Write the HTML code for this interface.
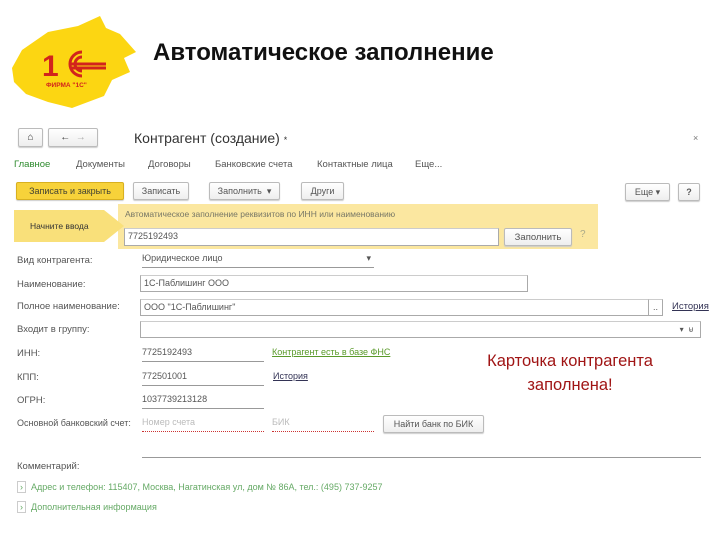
<!DOCTYPE html>
<html><head><meta charset="utf-8"><style>
*{margin:0;padding:0;box-sizing:border-box}
body{width:720px;height:540px;background:#fff;position:relative;overflow:hidden;font-family:"Liberation Sans",sans-serif;color:#444}
.a{position:absolute;white-space:nowrap}
.s{font-size:9.5px;color:#555}
.btn{position:absolute;border:1px solid #bbb;border-radius:2px;background:linear-gradient(#fff,#eee);font-size:9px;color:#555;text-align:center;line-height:17px;box-shadow:0 1px 1px #ccc}
.fld{position:absolute;border:1px solid #aaa;border-top-color:#ccc;background:#fff;height:17px;font-size:9px;line-height:15px;padding-left:3px;color:#555}
.ul{position:absolute;border-bottom:1px solid #999;height:17px;font-size:9px;line-height:15px;color:#555}
</style></head><body>
<svg class="a" style="left:8px;top:10px" width="130" height="100" viewBox="0 0 130 100">
<path d="M14 40 L40 22 L70 16 L92 6 L98 18 L112 24 L128 42 L116 48 L122 62 L104 70 L96 86 L64 98 L40 92 L18 84 L6 72 L4 58 Z" fill="#fcd612"/>
<text x="34" y="66" font-family="Liberation Sans" font-weight="bold" font-size="30" fill="#d2241c">1</text>
<path d="M74 42 a12 12 0 1 0 0 24 M74 47 a7 7 0 1 0 0 14 M62 54 h36 M62 58 h36" fill="none" stroke="#d2241c" stroke-width="3"/>
<text x="38" y="77" font-family="Liberation Sans" font-weight="bold" font-size="6.5" fill="#d2241c">ФИРМА "1С"</text>
</svg>
<div class="a" style="left:153px;top:39px;font-size:24px;color:#111;font-weight:bold">Автоматическое заполнение</div>

<div class="btn" style="left:18px;top:128px;width:25px;height:19px;font-size:10px;color:#333">⌂</div>
<div class="btn" style="left:48px;top:128px;width:50px;height:19px;font-size:10px;color:#333">←&nbsp;&nbsp;<span style="color:#aaa">→</span></div>
<div class="a" style="left:134px;top:130px;font-size:14px;color:#333">Контрагент (создание) <span style="font-size:9px">*</span></div>
<div class="a" style="left:693px;top:133px;font-size:9px;color:#777">×</div>

<div class="a s" style="left:14px;top:159px;color:#2e8b2e">Главное</div>
<div class="a s" style="left:76px;top:159px">Документы</div>
<div class="a s" style="left:148px;top:159px">Договоры</div>
<div class="a s" style="left:215px;top:159px">Банковские счета</div>
<div class="a s" style="left:317px;top:159px">Контактные лица</div>
<div class="a s" style="left:415px;top:159px">Еще...</div>

<div class="btn" style="left:16px;top:182px;width:108px;height:18px;background:#f7d23a;border-color:#d8b020;color:#443">Записать и закрыть</div>
<div class="btn" style="left:133px;top:182px;width:56px;height:18px">Записать</div>
<div class="btn" style="left:209px;top:182px;width:71px;height:18px">Заполнить &nbsp;▾</div>
<div class="btn" style="left:301px;top:182px;width:43px;height:18px">Други</div>
<div class="btn" style="left:625px;top:183px;width:45px;height:18px">Еще ▾</div>
<div class="btn" style="left:678px;top:183px;width:22px;height:18px;font-weight:bold">?</div>

<div class="a" style="left:118px;top:204px;width:480px;height:45px;background:#fbe7a0"></div>
<svg class="a" style="left:14px;top:210px" width="112" height="32"><path d="M0 0 H90 L110 16 L90 32 H0 Z" fill="#f9e07a"/></svg>
<div class="a" style="left:30px;top:221px;font-size:8.5px;color:#333">Начните ввода</div>
<div class="a" style="left:125px;top:209px;font-size:8.5px;color:#776">Автоматическое заполнение реквизитов по ИНН или наименованию</div>
<div class="fld" style="left:124px;top:228px;width:375px;height:18px">7725192493</div>
<div class="btn" style="left:504px;top:228px;width:68px;height:18px;font-size:9.5px">Заполнить</div>
<div class="a" style="left:580px;top:229px;font-size:10px;color:#aa8">?</div>

<div class="a s" style="left:17px;top:255px">Вид контрагента:</div>
<div class="ul" style="left:142px;top:251px;width:232px">Юридическое лицо <span style="position:absolute;right:3px">▾</span></div>
<div class="a s" style="left:17px;top:279px">Наименование:</div>
<div class="fld" style="left:140px;top:275px;width:388px">1С-Паблишинг ООО</div>
<div class="a s" style="left:17px;top:301px">Полное наименование:</div>
<div class="fld" style="left:140px;top:299px;width:509px">ООО "1С-Паблишинг"</div>
<div class="fld" style="left:648px;top:299px;width:15px;padding-left:4px">..</div>
<div class="a" style="left:672px;top:301px;font-size:9.5px;color:#335;text-decoration:underline">История</div>
<div class="a s" style="left:17px;top:324px">Входит в группу:</div>
<div class="fld" style="left:140px;top:321px;width:561px"><span style="position:absolute;right:6px;font-size:8px">▾ &nbsp;⊌</span></div>
<div class="a s" style="left:17px;top:348px">ИНН:</div>
<div class="ul" style="left:142px;top:345px;width:122px">7725192493</div>
<div class="a" style="left:272px;top:347px;font-size:9px;color:#5a9a2a;text-decoration:underline">Контрагент есть в базе ФНС</div>
<div class="a s" style="left:17px;top:372px">КПП:</div>
<div class="ul" style="left:142px;top:369px;width:122px">772501001</div>
<div class="a" style="left:273px;top:371px;font-size:9px;color:#335;text-decoration:underline">История</div>
<div class="a s" style="left:17px;top:395px">ОГРН:</div>
<div class="ul" style="left:142px;top:392px;width:122px">1037739213128</div>
<div class="a" style="left:17px;top:418px;font-size:9px;color:#555">Основной банковский счет:</div>
<div class="ul" style="left:142px;top:415px;width:122px;border-bottom:1px dotted #c33;color:#bbb">Номер счета</div>
<div class="ul" style="left:272px;top:415px;width:102px;border-bottom:1px dotted #c33;color:#bbb">БИК</div>
<div class="btn" style="left:383px;top:415px;width:101px;height:18px">Найти банк по БИК</div>
<div class="a" style="left:470px;top:349px;width:200px;text-align:center;font-size:16.5px;line-height:24px;color:#a01515">Карточка контрагента<br>заполнена!</div>
<div class="ul" style="left:142px;top:441px;width:559px"></div>
<div class="a s" style="left:17px;top:461px">Комментарий:</div>
<div class="a" style="left:17px;top:482px;font-size:9px;color:#6a6"><span style="border:1px solid #ccc;padding:0 2px">›</span>&nbsp; Адрес и телефон: 115407, Москва, Нагатинская ул, дом № 86А, тел.: (495) 737-9257</div>
<div class="a" style="left:17px;top:502px;font-size:9px;color:#6a6"><span style="border:1px solid #ccc;padding:0 2px">›</span>&nbsp; Дополнительная информация</div>
</body></html>
